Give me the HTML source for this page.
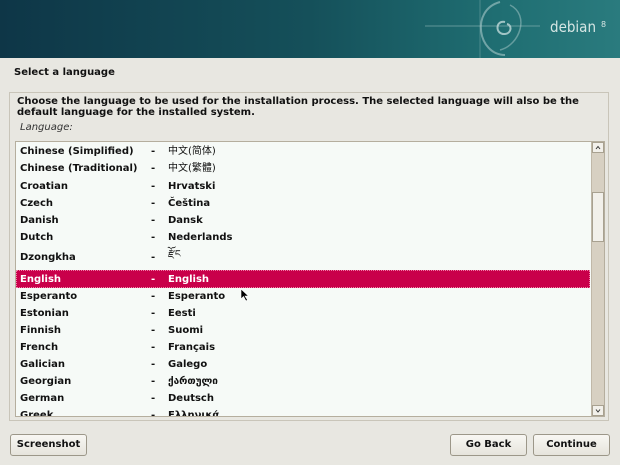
<!DOCTYPE html>
<html><head><meta charset="utf-8"><style>
*{margin:0;padding:0;box-sizing:border-box}
body{width:620px;height:465px;background:#e8e7e1;font-family:"DejaVu Sans","Liberation Sans","Noto Sans CJK SC",sans-serif;font-size:10px;font-weight:bold;color:#111;position:relative;overflow:hidden}
.hdr{position:absolute;left:0;top:0;width:620px;height:58px;background:linear-gradient(90deg,#0e3647 0%,#15505a 50%,#1f6e72 80%,#2a7b7e 100%)}
.abs{position:absolute;white-space:nowrap}
.frame{position:absolute;left:9px;top:92px;width:600px;height:329px;border:1px solid #c9c5b9}
.list{position:absolute;left:15px;top:141px;width:590px;height:276px;background:#f6faf7;border:1px solid #b5ae9e;overflow:hidden}
.row{position:absolute;left:4px;height:17px;line-height:17px;margin-top:1px}
.row span{position:absolute;white-space:nowrap}
.sb{position:absolute;left:591px;top:142px;width:13px;height:274px;background:#d7d0c2;border-left:1px solid #c0b8a8}
.btn{position:absolute;height:22px;border:1px solid #9c9789;border-radius:3px;background:linear-gradient(#f8f7f3,#e6e4dc);text-align:center;line-height:20px;font-size:10px}
</style></head><body>
<div class="hdr">
<svg width="620" height="58" style="position:absolute;left:0;top:0">
<line x1="425" y1="26" x2="540" y2="26" stroke="#8fb8b8" stroke-width="1" opacity=".6"/>
<line x1="480" y1="0" x2="480" y2="58" stroke="#8fb8b8" stroke-width="1" opacity=".4"/>
<path d="M500 2 C470 10 478 55 505 55" fill="none" stroke="#a9caca" stroke-width="2" opacity=".6"/>
<path d="M505 22 C495 20 495 35 505 34 C512 33 512 25 507 24" fill="none" stroke="#c0dada" stroke-width="2" opacity=".8"/>
<path d="M510 5 C530 15 520 45 500 50" fill="none" stroke="#a9caca" stroke-width="1.5" opacity=".5"/>
<text x="550" y="32" font-family="DejaVu Sans,sans-serif" font-weight="normal" font-size="15" textLength="46" lengthAdjust="spacingAndGlyphs" fill="#d6e6e4">debian</text>
<text x="601" y="27" font-family="DejaVu Sans,sans-serif" font-weight="normal" font-size="8" fill="#d6e6e4">8</text>
</svg></div>
<div class="abs" style="left:14px;top:67px">Select a language</div>
<div class="frame"></div>
<div class="abs" style="left:17px;top:96px;line-height:11px">Choose the language to be used for the installation process. The selected language will also be the<br>default language for the installed system.</div>
<div class="abs" style="left:20px;top:122px;font-weight:normal;font-style:italic;color:#333">Language:</div>
<div class="list">
<div class="row" style="top:0"><span style="left:0">Chinese (Simplified)</span><span style="left:131px">-</span><span style="left:148px;font-weight:normal">中文(简体)</span></div>
<div class="row" style="top:17px"><span style="left:0">Chinese (Traditional)</span><span style="left:131px">-</span><span style="left:148px;font-weight:normal">中文(繁體)</span></div>
<div class="row" style="top:35px"><span style="left:0">Croatian</span><span style="left:131px">-</span><span style="left:148px">Hrvatski</span></div>
<div class="row" style="top:52px"><span style="left:0">Czech</span><span style="left:131px">-</span><span style="left:148px">Čeština</span></div>
<div class="row" style="top:69px"><span style="left:0">Danish</span><span style="left:131px">-</span><span style="left:148px">Dansk</span></div>
<div class="row" style="top:86px"><span style="left:0">Dutch</span><span style="left:131px">-</span><span style="left:148px">Nederlands</span></div>
<div class="row" style="top:106px"><span style="left:0">Dzongkha</span><span style="left:131px">-</span><span style="left:148px;font-weight:normal;top:-3px">རྫོང</span></div>
<div style="position:absolute;left:0;top:128px;width:574px;height:18px;background:#c9004a;border:1px dotted #f080a8"></div>
<div class="row" style="top:128px;color:#fff"><span style="left:0">English</span><span style="left:131px">-</span><span style="left:148px">English</span></div>
<div class="row" style="top:145px"><span style="left:0">Esperanto</span><span style="left:131px">-</span><span style="left:148px">Esperanto</span></div>
<div class="row" style="top:162px"><span style="left:0">Estonian</span><span style="left:131px">-</span><span style="left:148px">Eesti</span></div>
<div class="row" style="top:179px"><span style="left:0">Finnish</span><span style="left:131px">-</span><span style="left:148px">Suomi</span></div>
<div class="row" style="top:196px"><span style="left:0">French</span><span style="left:131px">-</span><span style="left:148px">Français</span></div>
<div class="row" style="top:213px"><span style="left:0">Galician</span><span style="left:131px">-</span><span style="left:148px">Galego</span></div>
<div class="row" style="top:230px"><span style="left:0">Georgian</span><span style="left:131px">-</span><span style="left:148px">ქართული</span></div>
<div class="row" style="top:247px"><span style="left:0">German</span><span style="left:131px">-</span><span style="left:148px">Deutsch</span></div>
<div class="row" style="top:264px"><span style="left:0">Greek</span><span style="left:131px">-</span><span style="left:148px">Ελληνικά</span></div>
</div>
<div class="sb">
<div style="position:absolute;left:0;top:0;width:12px;height:11px;background:#f2f0ea;border:1px solid #a8a190"><svg width="10" height="9" style="position:absolute;left:0;top:0"><path d="M3 6 L5 3.5 L7 6" fill="none" stroke="#333" stroke-width="1"/></svg></div>
<div style="position:absolute;left:0;top:50px;width:12px;height:50px;background:#f2f0ea;border:1px solid #a8a190"></div>
<div style="position:absolute;left:0;bottom:0;width:12px;height:11px;background:#f2f0ea;border:1px solid #a8a190"><svg width="10" height="9" style="position:absolute;left:0;top:0"><path d="M3 3.5 L5 6 L7 3.5" fill="none" stroke="#333" stroke-width="1"/></svg></div>
</div>
<svg class="abs" style="left:240px;top:288px" width="10" height="14"><path d="M1 1 L1 11 L3.5 8.5 L6 13 L7.5 12 L5 8 L8.5 8 Z" fill="#000" stroke="#fff" stroke-width=".6"/></svg>
<div class="btn" style="left:10px;top:434px;width:77px">Screenshot</div>
<div class="btn" style="left:450px;top:434px;width:77px">Go Back</div>
<div class="btn" style="left:533px;top:434px;width:77px">Continue</div>
</body></html>
